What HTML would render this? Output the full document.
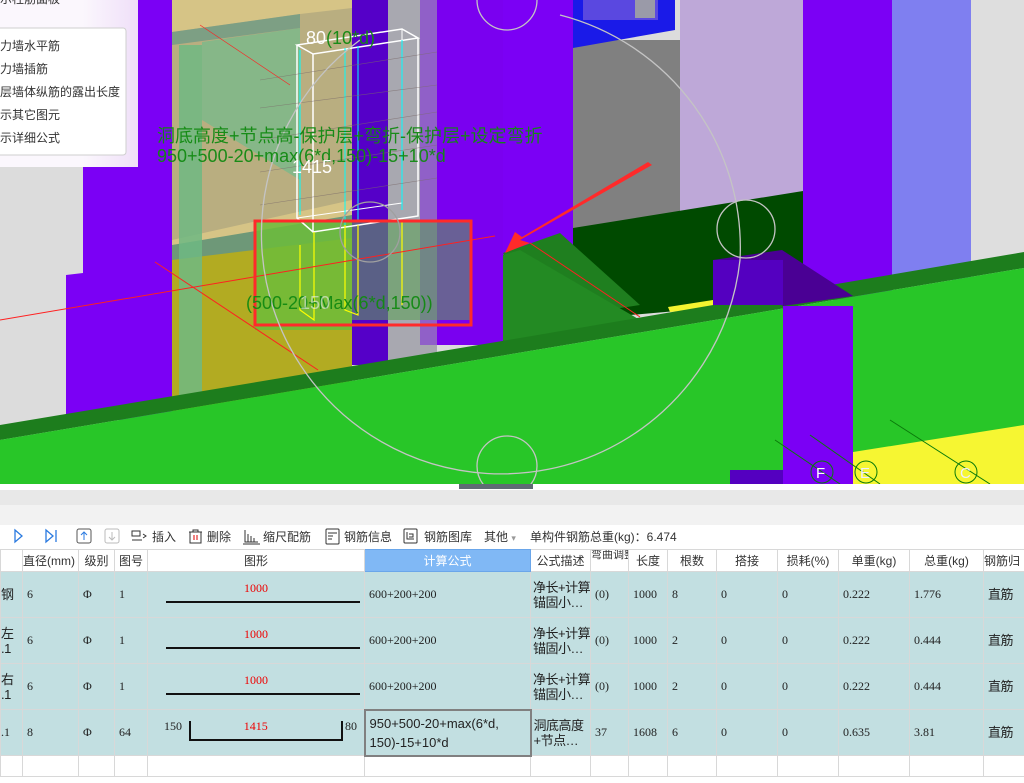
<!DOCTYPE html>
<html><head><meta charset="utf-8"><style>
*{margin:0;padding:0;box-sizing:border-box}
body{width:1024px;height:783px;overflow:hidden;background:#fff;position:relative;font-family:"Liberation Sans","Noto Sans CJK SC",sans-serif}
.abs{position:absolute}
table{border-collapse:collapse;position:absolute;left:0;top:549px;table-layout:fixed;width:1024px}
td{border:1px solid #d8d8d8;font-size:12px;color:#222;padding:0 4px;vertical-align:middle;white-space:nowrap;overflow:hidden}
tr.h td{height:22px;background:#fff;text-align:center;font-size:12px;color:#333;padding:0}
tr.r td{height:46px;background:#c2dfe1;font-family:"Liberation Serif","Noto Sans CJK SC",serif;font-size:12px}
tr.e td{height:21px;background:#fff}
.cj{font-family:"Liberation Sans","Noto Sans CJK SC",sans-serif!important;line-height:15px;font-size:13px!important;letter-spacing:-0.5px}
.tb{font-size:12px;color:#333;top:528px;font-family:"Liberation Sans","Noto Sans CJK SC",sans-serif}
</style></head><body>
<svg class="abs" style="left:0;top:0" width="1024" height="484" viewBox="0 0 1024 484">
<rect width="1024" height="484" fill="#dcdcdc"/>
<polygon points="83,0 172,0 172,420 66,420 66,275 83,273" fill="#7b00f5"/>
<rect x="172" y="0" width="180" height="420" fill="#d6c486"/>
<polygon points="172,32 300,14 352,8 352,200 172,240" fill="#b9ae80"/>
<polygon points="172,255 352,225 352,420 172,420" fill="#b2ab22"/>
<polygon points="172,245 352,215 352,238 172,260" fill="#6e9878"/>
<rect x="179" y="45" width="23" height="350" fill="#6fb882" opacity="0.85"/>
<polygon points="202,42 300,28 300,180 202,120" fill="#79b98a" opacity="0.8"/>
<polygon points="172,32 300,14 300,28 172,45" fill="#7d9f84"/>
<polygon points="255,220 470,220 470,330 255,330" fill="#6cbc3a" opacity="0.85"/>
<rect x="352" y="0" width="36" height="365" fill="#5500c8"/>
<rect x="388" y="0" width="49" height="360" fill="#a8a8b0"/>
<rect x="437" y="0" width="66" height="345" fill="#7a00f0"/>
<rect x="420" y="0" width="17" height="345" fill="#9060c8"/>
<rect x="352" y="220" width="120" height="100" fill="#5ea05a" opacity="0.6"/>
<rect x="503" y="0" width="70" height="340" fill="#7b00f5"/>
<rect x="573" y="40" width="107" height="200" fill="#808080"/>
<polygon points="573,0 675,0 675,30 573,48" fill="#1a1ae8"/>
<rect x="583" y="0" width="75" height="20" fill="#5a48e0"/>
<rect x="635" y="0" width="20" height="18" fill="#9a9aa8"/>
<rect x="680" y="0" width="123" height="215" fill="#bea8d8"/>
<rect x="803" y="0" width="89" height="300" fill="#7b00f5"/>
<rect x="892" y="0" width="79" height="280" fill="#7f7ff0"/>
<rect x="971" y="0" width="53" height="265" fill="#dedede"/>
<polygon points="573,228 803,191 803,300 573,320" fill="#004a00"/>
<polygon points="503,253 560,233 640,305 540,320" fill="#1f7f1f"/>
<polygon points="503,255 520,250 640,320 503,345" fill="#238a23"/>
<polygon points="668,307 713,300 713,308 670,312" fill="#f4f430"/>
<polygon points="0,425 520,338 1024,252 1024,268 0,440" fill="#1d7d1d"/>
<polygon points="0,440 1024,268 1024,484 0,484" fill="#28c628"/>
<polygon points="853,452 1024,425 1024,484 853,484" fill="#f6f632"/>
<polygon points="713,260 782,250 853,296 783,306" fill="#4a0094"/>
<rect x="713" y="260" width="70" height="45" fill="#5400c0"/>
<rect x="783" y="306" width="70" height="178" fill="#7b00f5"/>
<rect x="730" y="470" width="53" height="14" fill="#5400c0"/>
<g stroke="#fff" stroke-width="1.5" fill="none">
<polygon points="297,45 313,54 418,38 402,29"/>
<polyline points="297,45 297,218 313,232 418,216 418,38"/>
<line x1="313" y1="54" x2="313" y2="232"/>
<line x1="297" y1="218" x2="402" y2="203" stroke-width="1"/>
<line x1="402" y1="29" x2="402" y2="203" stroke-width="1"/>
</g>
<g stroke="#00ffff" stroke-width="1"><line x1="345" y1="48" x2="345" y2="225"/><line x1="358" y1="46" x2="358" y2="222"/><line x1="402" y1="40" x2="402" y2="210"/><line x1="300" y1="50" x2="300" y2="215"/></g>
<g stroke="#ffff00" stroke-width="1.2" fill="none"><polyline points="300,245 300,310 314,320 314,232"/><polyline points="345,225 345,310 358,315 358,225"/><line x1="402" y1="222" x2="402" y2="305"/></g>
<g stroke="#7a6a6a" stroke-width="0.6" opacity="0.7"><line x1="260" y1="80" x2="437" y2="52"/><line x1="260" y1="108" x2="437" y2="85"/><line x1="260" y1="140" x2="437" y2="112"/><line x1="260" y1="172" x2="437" y2="145"/><line x1="260" y1="205" x2="437" y2="178"/></g>
<g stroke="#ff2020" stroke-width="1"><line x1="0" y1="320" x2="495" y2="236"/><line x1="155" y1="262" x2="318" y2="370"/><line x1="200" y1="25" x2="290" y2="85" stroke-width="0.6"/><line x1="530" y1="243" x2="640" y2="317"/></g>
<rect x="255" y="221" width="216" height="104" fill="none" stroke="#ff2a2a" stroke-width="3"/>
<polygon points="652,165 520,240 530,243 505,253 515,232 522,237 648,162" fill="#ff2a2a"/>
<g fill="none" stroke="#c4c4c4" stroke-width="1.3"><circle cx="507" cy="0" r="30"/><circle cx="370" cy="232" r="30" stroke="#a0a0a0"/><circle cx="746" cy="229" r="29"/><circle cx="507" cy="466" r="30"/><path d="M360,40 A240,240 0 1 0 740,260 A240,240 0 0 0 560,15"/></g>
<g fill="none" stroke="#0a7a0a" stroke-width="1"><line x1="775" y1="440" x2="840" y2="484"/><line x1="810" y1="435" x2="880" y2="484"/><line x1="890" y1="420" x2="990" y2="484"/><circle cx="822" cy="472" r="11"/><circle cx="866" cy="472" r="11"/><circle cx="966" cy="472" r="11"/></g>
<g font-family="Liberation Sans,sans-serif" font-size="15" fill="#fff"><text x="816" y="478">F</text><text x="860" y="478" fill="#eef">E</text><text x="960" y="478" fill="#eef">C</text></g>
<g font-family="Liberation Sans,'Noto Sans CJK SC',sans-serif" font-size="18" fill="#128a12" opacity="0.95">
<text x="157" y="142">洞底高度+节点高-保护层+弯折-保护层+设定弯折</text>
<text x="157" y="162">950+500-20+max(6*d,150)-15+10*d</text>
<text x="246" y="309">(500-20+Max(6*d,150))</text>
<text x="326" y="44">(10*d)</text>
</g>
<text x="306" y="44" font-family="Liberation Sans,sans-serif" font-size="18" fill="#fff">80</text>
<text x="292" y="173" font-family="Liberation Sans,sans-serif" font-size="18" fill="#fff">1415</text>
<text x="300" y="309" font-family="Liberation Sans,sans-serif" font-size="18" fill="#eee" opacity="0.6">150</text>
<defs><linearGradient id="pg" x1="0" x2="1"><stop offset="0.6" stop-color="#fbf7fd"/><stop offset="1" stop-color="#efdff8"/></linearGradient></defs>
<rect x="0" y="0" width="138" height="167" fill="url(#pg)"/>
<rect x="-5" y="28" width="131" height="127" rx="3" fill="#fff" stroke="#cfcfcf"/>
<g font-family="Liberation Sans,'Noto Sans CJK SC',sans-serif" font-size="12" fill="#333">
<text x="0" y="3">示柱筋面板</text>
<text x="0" y="50">力墙水平筋</text><text x="0" y="73">力墙插筋</text><text x="0" y="96">层墙体纵筋的露出长度</text><text x="0" y="119">示其它图元</text><text x="0" y="142">示详细公式</text>
</g>
</svg>
<div class="abs" style="left:0;top:484px;width:1024px;height:6px;background:#fff"></div>
<div class="abs" style="left:459px;top:484px;width:74px;height:5px;background:#5f6b74"></div>
<div class="abs" style="left:0;top:490px;width:1024px;height:15px;background:#e8e8e8"></div>
<div class="abs" style="left:0;top:505px;width:1024px;height:20px;background:#f2f2f2"></div>
<svg class="abs" style="left:0;top:526px" width="380" height="22">
<g fill="none" stroke="#2a7ae0" stroke-width="1.3"><path d="M15,4 L22,10 L15,16 Z"/><path d="M46,4 L53,10 L46,16 Z"/><line x1="56" y1="4" x2="56" y2="16"/></g>
<rect x="77" y="3" width="14" height="14" rx="2" fill="none" stroke="#555"/><path d="M84,14 V6 M81,9 L84,6 L87,9" stroke="#2a7ae0" fill="none"/>
<rect x="105" y="3" width="14" height="14" rx="2" fill="none" stroke="#bbb"/><path d="M112,6 V14 M109,11 L112,14 L115,11" stroke="#bbb" fill="none"/>
<path d="M132,5 H140 V10 H132 Z M132,14 H142 M143,8 L146,10 L143,12" stroke="#333" fill="none"/>
<path d="M189,6 H202 M193,6 V4 H198 V6 M190,6 V17 H201 V6" stroke="#333" fill="none"/><path d="M194,9 V14 M197,9 V14" stroke="#d00"/>
<path d="M245,4 V16 H258 M248,8 V16 M251,10 V16 M254,12 V16 M243,18 H260" stroke="#333" fill="none"/>
<rect x="326" y="3" width="13" height="15" rx="1" fill="none" stroke="#333"/><path d="M328,7 H337 M328,10 H333 M328,13 H332" stroke="#333"/>
</svg>
<div class="abs tb" style="left:152px">插入</div>
<div class="abs tb" style="left:207px">删除</div>
<div class="abs tb" style="left:263px">缩尺配筋</div>
<div class="abs tb" style="left:344px">钢筋信息</div>
<svg class="abs" style="left:403px;top:528px" width="16" height="17"><rect x="1" y="1" width="13" height="14" rx="1" fill="none" stroke="#333"/><path d="M4,4 V11 H11 M6,6 H10 V9 H6" stroke="#333" fill="none"/></svg>
<div class="abs tb" style="left:424px">钢筋图库</div>
<div class="abs tb" style="left:484px">其他 <span style="color:#999;font-size:9px">▾</span></div>
<div class="abs tb" style="left:530px">单构件钢筋总重(kg)：6.474</div>
<table>
<colgroup><col style="width:22px"><col style="width:56px"><col style="width:36px"><col style="width:33px"><col style="width:217px"><col style="width:166px"><col style="width:60px"><col style="width:38px"><col style="width:39px"><col style="width:49px"><col style="width:61px"><col style="width:61px"><col style="width:71px"><col style="width:74px"><col style="width:41px"></colgroup>
<tr class="h"><td></td><td style="text-align:left">直径(mm)</td><td>级别</td><td>图号</td><td>图形</td><td style="background:#80b8f5;color:#fff;border-color:#6aa6ea">计算公式</td><td>公式描述</td><td style="font-size:11px;line-height:11px;vertical-align:top">弯曲调整</td><td>长度</td><td>根数</td><td>搭接</td><td>损耗(%)</td><td>单重(kg)</td><td>总重(kg)</td><td style="text-align:left">钢筋归</td></tr>
<tr class="r"><td class="cj" style="padding:0">钢</td><td>6</td><td>Φ</td><td>1</td><td style="position:relative"><div class="abs" style="left:18px;right:4px;top:29px;border-top:2px solid #111"></div><div class="abs" style="left:0;right:0;top:9px;text-align:center;color:#e00">1000</div></td><td>600+200+200</td><td class="cj" style="padding:0 2px">净长+计算<br>锚固小…</td><td>(0)</td><td>1000</td><td>8</td><td>0</td><td>0</td><td>0.222</td><td>1.776</td><td class="cj">直筋</td></tr>
<tr class="r"><td class="cj" style="padding:0">左<br>.1</td><td>6</td><td>Φ</td><td>1</td><td style="position:relative"><div class="abs" style="left:18px;right:4px;top:29px;border-top:2px solid #111"></div><div class="abs" style="left:0;right:0;top:9px;text-align:center;color:#e00">1000</div></td><td>600+200+200</td><td class="cj" style="padding:0 2px">净长+计算<br>锚固小…</td><td>(0)</td><td>1000</td><td>2</td><td>0</td><td>0</td><td>0.222</td><td>0.444</td><td class="cj">直筋</td></tr>
<tr class="r"><td class="cj" style="padding:0">右<br>.1</td><td>6</td><td>Φ</td><td>1</td><td style="position:relative"><div class="abs" style="left:18px;right:4px;top:29px;border-top:2px solid #111"></div><div class="abs" style="left:0;right:0;top:9px;text-align:center;color:#e00">1000</div></td><td>600+200+200</td><td class="cj" style="padding:0 2px">净长+计算<br>锚固小…</td><td>(0)</td><td>1000</td><td>2</td><td>0</td><td>0</td><td>0.222</td><td>0.444</td><td class="cj">直筋</td></tr>
<tr class="r"><td style="padding:0">.1</td><td>8</td><td>Φ</td><td>64</td><td style="position:relative"><div class="abs" style="left:41px;width:154px;top:11px;height:20px;border:2px solid #111;border-top:none"></div><div class="abs" style="left:16px;top:9px">150</div><div class="abs" style="left:0;right:0;top:9px;text-align:center;color:#e00">1415</div><div class="abs" style="left:197px;top:9px">80</div></td><td class="cj" style="border:2px solid #808080;line-height:19px;letter-spacing:0">950+500-20+max(6*d,<br>150)-15+10*d</td><td class="cj" style="padding:0 2px">洞底高度<br>+节点…</td><td>37</td><td>1608</td><td>6</td><td>0</td><td>0</td><td>0.635</td><td>3.81</td><td class="cj">直筋</td></tr>
<tr class="e"><td></td><td></td><td></td><td></td><td></td><td></td><td></td><td></td><td></td><td></td><td></td><td></td><td></td><td></td><td></td></tr>
</table>
</body></html>
